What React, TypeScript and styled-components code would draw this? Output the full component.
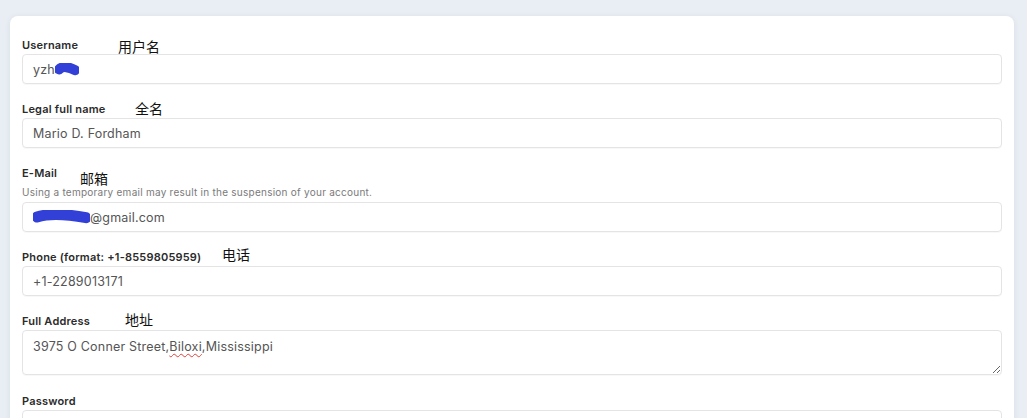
import React from "react";
import styled, { createGlobalStyle } from "styled-components";

const GlobalStyle = createGlobalStyle`
  html, body {
    margin: 0;
    background: #e9eef4;
    overflow: hidden;
  }
  body {
    font-family: Inter, "Noto Sans", sans-serif;
  }
`;

const Page = styled.div`
  padding: 16px 13px 0 10px;
`;

const Card = styled.div`
  background: #fff;
  border-radius: 8px;
  box-shadow: 0 1px 6px rgba(30, 50, 80, 0.08);
  padding: 17px 12px 40px 12px;
`;

const Field = styled.div<{ $space?: number }>`
  display: flex;
  flex-direction: column;
  margin-bottom: ${(p) => p.$space ?? 13}px;
`;

const LabelRow = styled.div`
  position: relative;
  height: 14px;
  margin-bottom: 7px;
`;

const Label = styled.label`
  font-size: 11px;
  line-height: 14px;
  font-weight: 600;
  letter-spacing: 0.2px;
  color: #2b2b2b;
  white-space: nowrap;
`;

const Note = styled.span<{ $x: number; $y: number }>`
  position: absolute;
  left: ${(p) => p.$x}px;
  top: ${(p) => p.$y}px;
  font-family: "Noto Sans CJK SC", sans-serif;
  font-size: 14px;
  line-height: 1;
  color: #111;
  white-space: nowrap;
`;

const Hint = styled.div`
  font-size: 10px;
  line-height: 13px;
  letter-spacing: 0.25px;
  color: #7a7a7a;
  margin: 4px 0 3px;
  white-space: nowrap;
`;

const InputBox = styled.div`
  box-sizing: border-box;
  height: 30px;
  display: flex;
  align-items: center;
  padding: 0 10px;
  border: 1px solid #e4e4e4;
  border-radius: 4px;
  box-shadow: 0 1px 1px rgba(0, 0, 0, 0.03);
  font-size: 12.5px;
  letter-spacing: 0.2px;
  color: #555;
  white-space: nowrap;
`;

const TextBox = styled(InputBox)`
  height: 45px;
  align-items: flex-start;
  padding-top: 8px;
  resize: vertical;
  overflow: auto;
`;

const Squiggle = styled.span`
  text-decoration: underline wavy #e0413a;
  text-decoration-thickness: 1px;
  text-underline-offset: 2px;
`;

const Scribble = ({ w, h }: { w: number; h: number }) => (
  <svg width={w} height={h} viewBox={`0 0 ${w} ${h}`} style={{ flexShrink: 0 }}>
    <path
      d={`M4 ${h / 2} C ${w * 0.3} ${h * 0.2}, ${w * 0.6} ${h * 0.3}, ${w - 4} ${h * 0.55}`}
      stroke="#3340d8"
      strokeWidth={h - 3}
      strokeLinecap="round"
      fill="none"
    />
  </svg>
);

export default function App() {
  return (
    <>
      <GlobalStyle />
      <Page>
        <Card>
          <Field>
            <LabelRow>
              <Label>Username</Label>
              <Note $x={96} $y={6}>用户名</Note>
            </LabelRow>
            <InputBox>
              yzh
              <Scribble w={24} h={13} />
            </InputBox>
          </Field>

          <Field>
            <LabelRow>
              <Label>Legal full name</Label>
              <Note $x={113} $y={4}>全名</Note>
            </LabelRow>
            <InputBox>Mario D. Fordham</InputBox>
          </Field>

          <Field>
            <LabelRow>
              <Label>E-Mail</Label>
              <Note $x={58} $y={10}>邮箱</Note>
            </LabelRow>
            <Hint>Using a temporary email may result in the suspension of your account.</Hint>
            <InputBox>
              <Scribble w={57} h={14} />
              @gmail.com
            </InputBox>
          </Field>

          <Field>
            <LabelRow>
              <Label>Phone (format: +1-8559805959)</Label>
              <Note $x={200} $y={2}>电话</Note>
            </LabelRow>
            <InputBox>+1-2289013171</InputBox>
          </Field>

          <Field $space={14}>
            <LabelRow>
              <Label>Full Address</Label>
              <Note $x={103} $y={3}>地址</Note>
            </LabelRow>
            <TextBox>
              3975 O Conner Street,<Squiggle>Biloxi</Squiggle>,Mississippi
            </TextBox>
          </Field>

          <Field>
            <LabelRow>
              <Label>Password</Label>
            </LabelRow>
            <InputBox />
          </Field>
        </Card>
      </Page>
    </>
  );
}
